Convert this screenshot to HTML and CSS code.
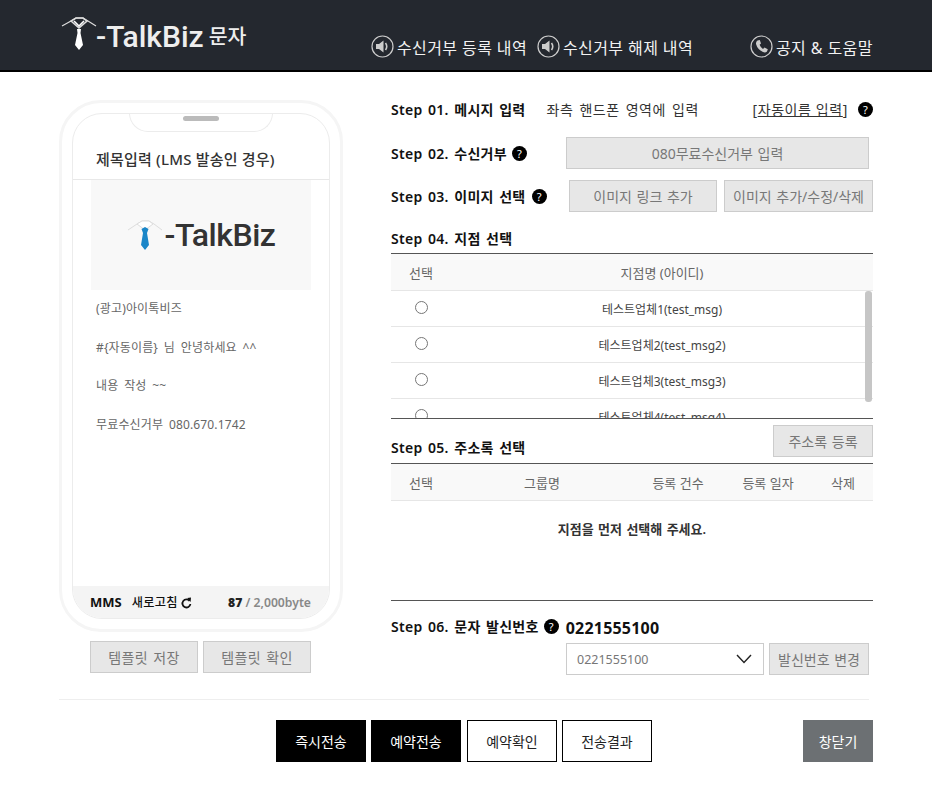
FILE: index.html
```html
<!DOCTYPE html>
<html lang="ko">
<head>
    <meta charset="UTF-8">
    <meta name="viewport" content="width=device-width, initial-scale=1.0">
    <title>TalkBiz 문자</title>
    <link rel="stylesheet" href="styles.css">
</head>
<body>

    <header class="top">
        <div class="logo">
            <svg class="logo-tie" width="36" height="38" viewBox="0 0 36 38">
                <path d="M1 12 L10 7 L15 4 L22 4 L27 7 L35 12" fill="none" stroke="#ddd" stroke-width="1.2"/>
                <path d="M10 7 L18 14 L26 7 L22 4 L15 4 Z" fill="none" stroke="#ddd" stroke-width="1.6"/>
                <path d="M13 7 L18 12 L23 7" fill="none" stroke="#fff" stroke-width="1.6"/>
                <path d="M16 15 H20 L19.5 19 L22 31 L18 36 L14 31 L16.5 19 Z" fill="#fff"/>
            </svg>
            <span class="logo-text">-TalkBiz</span>
            <span class="logo-sub">문자</span>
        </div>
        <nav class="top-nav">
            <a class="nav-item nav-first">
                <svg class="nav-icon" width="23" height="23" viewBox="0 0 23 23">
                    <circle cx="11.5" cy="11.5" r="10.5" fill="none" stroke="#ccc" stroke-width="1.2"/>
                    <path d="M5 9 H8 L12.5 5.5 V17.5 L8 14 H5 Z" fill="#ccc"/>
                    <path d="M14.5 8 Q17 11.5 14.5 15" fill="none" stroke="#ccc" stroke-width="1.6"/>
                </svg>
                수신거부 등록 내역
            </a>
            <a class="nav-item nav-second">
                <svg class="nav-icon" width="23" height="23" viewBox="0 0 23 23">
                    <circle cx="11.5" cy="11.5" r="10.5" fill="none" stroke="#ccc" stroke-width="1.2"/>
                    <path d="M5 9 H8 L12.5 5.5 V17.5 L8 14 H5 Z" fill="#ccc"/>
                    <path d="M14.5 8 Q17 11.5 14.5 15" fill="none" stroke="#ccc" stroke-width="1.6"/>
                </svg>
                수신거부 해제 내역
            </a>
            <a class="nav-item nav-third">
                <svg class="nav-icon" width="23" height="23" viewBox="0 0 23 23">
                    <circle cx="11.5" cy="11.5" r="10.5" fill="none" stroke="#ccc" stroke-width="1.2"/>
                    <path d="M7.5 5.5 L9.8 5 L11 8.5 L9.6 9.8 Q10.5 12.5 13 14 L14.5 12.6 L17.8 14.2 L17 16.4 Q15.5 18 13 17 Q7.5 14.5 6 9 Q5.8 6.8 7.5 5.5 Z" fill="#ccc"/>
                </svg>
                공지 &amp; 도움말
            </a>
        </nav>
    </header>

    <main class="content">
        <section class="left">
            <div class="phone">
                <div class="screen">
                    <div class="notch"><span class="speaker"></span></div>
                    <div class="subject">제목입력 (LMS 발송인 경우)</div>
                    <div class="mms-image">
                        <svg width="36" height="34" viewBox="0 0 36 34">
                            <path d="M1 12 L10 6 L15 3 L22 3 L27 6 L35 12" fill="none" stroke="#ddd" stroke-width="1"/>
                            <path d="M10 6 L18 12 L26 6 L22 3 L15 3 Z" fill="#fff" stroke="#ddd" stroke-width="1"/>
                            <path d="M14.5 11 L18 9 L21.5 11 L20 15 L22 27 L18 32 L14 27 L16 15 Z" fill="#1a86c8"/>
                        </svg>
                        <span class="mms-logo-text">-TalkBiz</span>
                    </div>
                    <div class="msg">
                        <p>(광고)아이톡비즈</p>
                        <p>#{자동이름} 님 안녕하세요 ^^</p>
                        <p>내용 작성 ~~</p>
                        <p>무료수신거부 080.670.1742</p>
                    </div>
                    <div class="screen-foot">
                        <strong class="mms">MMS</strong>
                        <span class="refresh">새로고침
                            <svg width="11" height="12" viewBox="0 0 11 12">
                                <path d="M8.6 4 A4 4 0 1 0 9.4 7" fill="none" stroke="#111" stroke-width="1.8"/>
                                <path d="M6.2 1 L10 0.6 L9.6 5 Z" fill="#111"/>
                            </svg>
                        </span>
                        <span class="bytes"><b>87</b> / 2,000byte</span>
                    </div>
                </div>
            </div>
            <div class="tpl-btns">
                <button class="btn-gray tpl-btn" type="button">템플릿 저장</button>
                <button class="btn-gray tpl-btn" type="button">템플릿 확인</button>
            </div>
        </section>

        <section class="right">
            <div class="step step-01">
                <span class="step-title">Step 01. 메시지 입력</span>
                <span class="step-note">좌측 핸드폰 영역에 입력</span>
                <span class="auto-name">[<u>자동이름 입력</u>]</span>
                <span class="help">?</span>
            </div>
            <div class="step step-02">
                <span class="step-title">Step 02. 수신거부</span>
                <span class="help">?</span>
                <button class="btn-gray btn-080" type="button">080무료수신거부 입력</button>
            </div>
            <div class="step step-03">
                <span class="step-title">Step 03. 이미지 선택</span>
                <span class="help">?</span>
                <button class="btn-gray btn-link" type="button">이미지 링크 추가</button>
                <button class="btn-gray btn-edit" type="button">이미지 추가/수정/삭제</button>
            </div>

            <div class="step step-04">
                <span class="step-title">Step 04. 지점 선택</span>
            </div>
            <div class="list-box">
                <table class="list">
                    <colgroup><col class="col-check"><col></colgroup>
                    <thead>
                        <tr><th>선택</th><th>지점명 (아이디)</th></tr>
                    </thead>
                    <tbody>
                        <tr><td><input type="radio" name="shop"></td><td>테스트업체1(test_msg)</td></tr>
                        <tr><td><input type="radio" name="shop"></td><td>테스트업체2(test_msg2)</td></tr>
                        <tr><td><input type="radio" name="shop"></td><td>테스트업체3(test_msg3)</td></tr>
                        <tr><td><input type="radio" name="shop"></td><td>테스트업체4(test_msg4)</td></tr>
                    </tbody>
                </table>
                <div class="scroll-thumb"></div>
            </div>

            <div class="step step-05">
                <span class="step-title">Step 05. 주소록 선택</span>
                <button class="btn-gray btn-addr" type="button">주소록 등록</button>
            </div>
            <div class="addr-box">
                <table class="list">
                    <colgroup><col class="col-check"><col class="col-group"><col class="col-num"><col class="col-num"><col class="col-check"></colgroup>
                    <thead>
                        <tr><th>선택</th><th>그룹명</th><th>등록 건수</th><th>등록 일자</th><th>삭제</th></tr>
                    </thead>
                </table>
                <p class="empty">지점을 먼저 선택해 주세요.</p>
            </div>

            <div class="step step-06">
                <span class="step-title">Step 06. 문자 발신번호</span>
                <span class="help">?</span>
                <strong class="sender">0221555100</strong>
            </div>
            <div class="sender-row">
                <div class="select">
                    0221555100
                    <svg width="16" height="10" viewBox="0 0 16 10">
                        <path d="M1 1 L8 8.5 L15 1" fill="none" stroke="#222" stroke-width="1.4"/>
                    </svg>
                </div>
                <button class="btn-gray btn-sender" type="button">발신번호 변경</button>
            </div>
        </section>
    </main>

    <div class="bottom">
        <button class="btn-black" type="button">즉시전송</button>
        <button class="btn-black btn-gap" type="button">예약전송</button>
        <button class="btn-white" type="button">예약확인</button>
        <button class="btn-white" type="button">전송결과</button>
        <button class="btn-close" type="button">창닫기</button>
    </div>

</body>
</html>
```

FILE: styles.css
```css
body {
    margin: 0;
    font-family: "Noto Sans", "Noto Sans CJK KR", sans-serif;
    color: #333;
    background: #fff;
}
button {
    font-family: inherit;
    cursor: pointer;
}

.top {
    height: 70px;
    background: #24282f;
    border-bottom: 2px solid #000;
    display: flex;
    color: #fff;
}
.logo {
    display: flex;
    align-items: center;
    height: 70px;
    padding-left: 61px;
    width: 371px;
    box-sizing: border-box;
}
.logo-tie {
    margin-top: -5px;
}
.logo-text {
    font-family: Roboto, sans-serif;
    font-size: 30px;
    font-weight: 500;
    color: #eee;
    margin-left: -1px;
    margin-top: 3px;
}
.logo-sub {
    font-size: 20.5px;
    font-weight: 500;
    color: #eee;
    margin-left: 5px;
    margin-top: -1px;
}
.top-nav {
    display: flex;
    padding-top: 35px;
}
.nav-item {
    display: flex;
    align-items: center;
    gap: 3px;
    height: 23px;
    font-size: 16px;
    letter-spacing: 0.4px;
    color: #f2f2f2;
    white-space: nowrap;
}
.nav-first { width: 166px; }
.nav-second { width: 213px; }

.content {
    display: flex;
    padding-top: 28px;
}
.left {
    width: 391px;
    flex: none;
    padding-left: 59px;
    box-sizing: border-box;
}
.phone {
    width: 284px;
    height: 532px;
    box-sizing: border-box;
    padding: 10px;
    border: 3px solid #f5f5f5;
    border-radius: 42px;
    background: #fff;
}
.screen {
    position: relative;
    height: 100%;
    box-sizing: border-box;
    border: 1px solid #ececec;
    border-radius: 30px;
    overflow: hidden;
    display: flex;
    flex-direction: column;
}
.notch {
    position: absolute;
    top: -1px;
    left: 56px;
    width: 144px;
    height: 19px;
    box-sizing: border-box;
    border: 1px solid #ececec;
    border-top: none;
    border-radius: 0 0 20px 20px;
    background: #fff;
    display: flex;
    justify-content: center;
    padding-top: 3px;
}
.speaker {
    width: 36px;
    height: 5px;
    border-radius: 3px;
    background: #bbb;
}
.subject {
    height: 66px;
    padding: 33px 0 0 23px;
    box-sizing: border-box;
    border-bottom: 1px solid #e8e8e8;
    font-size: 15px;
    font-weight: 500;
    letter-spacing: 0.2px;
    color: #333;
    line-height: 24px;
}
.mms-image {
    width: 220px;
    height: 110px;
    margin-left: 18px;
    background: #f8f8f8;
    display: flex;
    align-items: center;
    justify-content: center;
}
.mms-logo-text {
    font-family: Roboto, sans-serif;
    font-size: 32px;
    font-weight: 500;
    color: #333;
    letter-spacing: -0.5px;
    margin-left: 2px;
}
.msg {
    flex: 1;
    padding: 10px 0 0 23px;
    font-size: 12px;
    letter-spacing: 0.15px;
    word-spacing: 2.5px;
    color: #666;
}
.msg p {
    margin: 0 0 20.5px;
    height: 18px;
    line-height: 18px;
}
.screen-foot {
    height: 32px;
    background: #f4f4f4;
    display: flex;
    align-items: center;
    padding: 0 18px 0 17px;
    font-size: 12.2px;
    color: #111;
}
.mms {
    font-size: 13px;
    margin-right: 10px;
}
.refresh {
    font-weight: 500;
    letter-spacing: 0.3px;
}
.refresh svg {
    vertical-align: -2px;
}
.bytes {
    margin-left: auto;
    color: #888;
    font-weight: 600;
}
.bytes b {
    color: #222;
}
.tpl-btns {
    display: flex;
    gap: 5px;
    margin: 9px 0 0 31px;
}

.btn-gray {
    height: 32px;
    padding: 0;
    border: 1px solid #ccc;
    background: #e7e7e7;
    color: #777;
    font-size: 14px;
    word-spacing: 1px;
    white-space: nowrap;
}
.tpl-btn {
    width: 108px;
    letter-spacing: 0.4px;
}

.right {
    width: 482px;
    margin-top: -1px;
}
.step {
    display: flex;
    align-items: center;
    color: #111;
}
.step-title {
    font-size: 14px;
    font-weight: 600;
    letter-spacing: 0.3px;
    word-spacing: 1.5px;
    color: #111;
    white-space: nowrap;
}
.help {
    width: 15px;
    height: 15px;
    border-radius: 50%;
    background: #000;
    color: #fff;
    font-size: 11px;
    line-height: 15px;
    text-align: center;
    flex: none;
}
.step-01 {
    height: 20px;
}
.step-note {
    font-size: 14px;
    letter-spacing: 0.5px;
    word-spacing: 2px;
    color: #333;
    margin-left: 21px;
}
.auto-name {
    font-size: 14px;
    letter-spacing: 0.6px;
    color: #333;
    margin-left: auto;
    margin-right: 10px;
}
.step-02 {
    height: 32px;
    margin-top: 18px;
}
.step-02 .help {
    margin-left: 5px;
}
.btn-080 {
    width: 303px;
    margin-left: auto;
    margin-right: 4px;
}
.step-03 {
    height: 32px;
    margin-top: 11px;
}
.step-03 .help {
    margin-left: 6px;
}
.btn-link {
    width: 148px;
    margin-left: auto;
}
.btn-edit {
    width: 149px;
    margin-left: 7px;
}
.step-04 {
    height: 20px;
    margin-top: 16px;
}

.list-box {
    position: relative;
    height: 164px;
    margin-top: 5px;
    overflow: hidden;
    border-top: 1px solid #555;
    border-bottom: 1px solid #555;
}
.list {
    width: 100%;
    border-collapse: collapse;
    table-layout: fixed;
}
.col-check { width: 60px; }
.col-group { width: 182px; }
.col-num { width: 90px; }
.list th {
    height: 36px;
    padding: 0;
    background: #f9f9f9;
    border-bottom: 1px solid #e6e6e6;
    font-size: 13px;
    font-weight: 400;
    color: #666;
}
.list td {
    height: 35px;
    padding: 0;
    border-bottom: 1px solid #e6e6e6;
    font-size: 12px;
    color: #444;
    text-align: center;
}
.list td input {
    margin: 0 0 4px;
    vertical-align: middle;
}
.scroll-thumb {
    position: absolute;
    top: 37px;
    right: 1px;
    width: 7px;
    height: 111px;
    border-radius: 3px;
    background: #c6c6c6;
}

.step-05 {
    height: 44px;
    margin-top: 0;
    align-items: flex-end;
    justify-content: space-between;
}
.step-05 .step-title {
    margin-bottom: 6px;
}
.btn-addr {
    width: 100px;
    margin-bottom: 6px;
}
.addr-box {
    height: 136px;
    border-top: 1px solid #555;
    border-bottom: 1px solid #555;
}
.empty {
    margin: 18px 0 0;
    font-size: 13px;
    font-weight: 600;
    word-spacing: 1px;
    color: #333;
    text-align: center;
}

.step-06 {
    height: 24px;
    margin-top: 13px;
}
.step-06 .help {
    margin-left: 5px;
}
.sender {
    font-size: 16px;
    letter-spacing: 0.2px;
    margin: 3px 0 0 7px;
}
.sender-row {
    display: flex;
    gap: 5px;
    margin: 5px 0 0 175px;
}
.select {
    width: 198px;
    height: 32px;
    box-sizing: border-box;
    border: 1px solid #ccc;
    padding: 0 11px 0 10px;
    display: flex;
    align-items: center;
    justify-content: space-between;
    font-size: 12.5px;
    color: #777;
}
.btn-sender { width: 100px; }

.bottom {
    display: flex;
    width: 810px;
    box-sizing: border-box;
    margin: 24px 0 0 59px;
    padding: 20px 0 0 217px;
    border-top: 1px solid #eee;
}
.bottom button {
    flex: none;
    width: 90px;
    height: 42px;
    padding: 0;
    font-size: 14px;
    margin-right: 5px;
}
.bottom .btn-gap {
    margin-right: 6px;
}
.btn-black {
    border: none;
    background: #000;
    color: #fff;
}
.btn-white {
    border: 1px solid #000;
    background: #fff;
    color: #222;
}
.bottom .btn-close {
    width: 70px;
    margin: 0 0 0 146px;
    border: none;
    background: #6c7073;
    color: #fff;
}
```
